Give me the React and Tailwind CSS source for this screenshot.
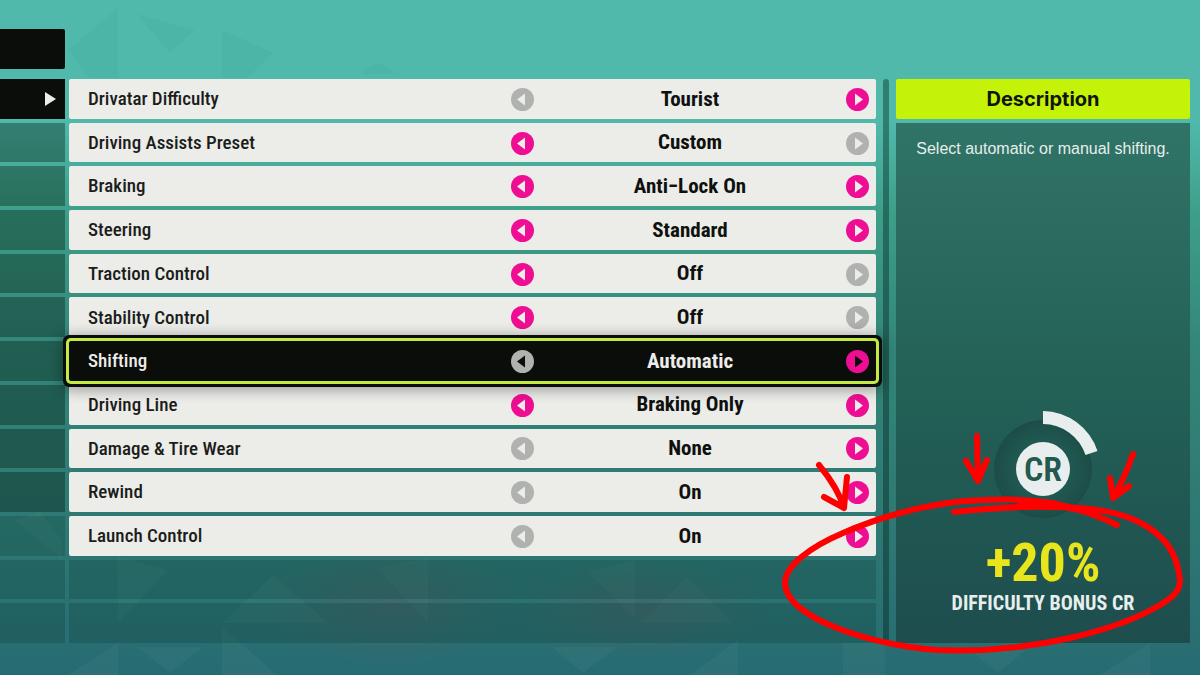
import { useState } from "react";

const SETTINGS = [
  { label: "Drivatar Difficulty", value: "Tourist", prev: false, next: true },
  { label: "Driving Assists Preset", value: "Custom", prev: true, next: false },
  { label: "Braking", value: "Anti−Lock On", prev: true, next: true },
  { label: "Steering", value: "Standard", prev: true, next: true },
  { label: "Traction Control", value: "Off", prev: true, next: false },
  { label: "Stability Control", value: "Off", prev: true, next: false },
  { label: "Shifting", value: "Automatic", prev: false, next: true },
  { label: "Driving Line", value: "Braking Only", prev: true, next: true },
  { label: "Damage & Tire Wear", value: "None", prev: false, next: true },
  { label: "Rewind", value: "On", prev: false, next: true },
  { label: "Launch Control", value: "On", prev: false, next: true },
];

const MENU_ROWS = 13;

function Backdrop() {
  return (
    <svg
      className="absolute inset-0 -z-10 size-full"
      viewBox="0 0 1200 675"
      preserveAspectRatio="none"
      aria-hidden="true"
    >
      <defs>
        <radialGradient id="ember" cx="0.5" cy="0.5" r="0.5">
          <stop offset="0" stopColor="#6b5660" stopOpacity="0.3" />
          <stop offset="1" stopColor="#6b5660" stopOpacity="0" />
        </radialGradient>
      </defs>
      <g fill="#2f8f80" fillOpacity="0.08">
        <path d="M118 8V78H90L68 50Z" />
        <path d="M136 14L195 30L170 53Z" />
        <path d="M222 30L273 53L247 78H222Z" />
        <path d="M362 74a18 18 0 0 1 32 0Z" />
      </g>
      <g fill="#5b9a95" fillOpacity="0.12">
        <path d="M15 520L62 560V540L40 512Z" />
        <path d="M118 557L168 570L118 623Z" />
        <path d="M273 575L222 623H328Z" />
        <path d="M377 568L428 558V623Z" />
        <path d="M588 572L635 560V618Z" />
        <path d="M687 577L640 623H733Z" />
        <path d="M68 675L118 643V675Z" />
        <path d="M138 647H203L170 673Z" />
        <path d="M222 627L277 675H222Z" />
        <path d="M552 647H617L583 673Z" />
        <path d="M690 675L738 640V675Z" />
        <path d="M843 643H885V675H843Z" />
        <path d="M970 650H1026L998 673Z" />
        <path d="M1100 675L1150 643V675Z" />
      </g>
      <ellipse cx="390" cy="605" rx="130" ry="60" fill="url(#ember)" />
      <ellipse cx="640" cy="610" rx="130" ry="50" fill="url(#ember)" />
    </svg>
  );
}

function ArrowButton({ direction, enabled, dark, label }) {
  return (
    <button
      type="button"
      aria-label={label}
      disabled={!enabled}
      className={`size-[23px] shrink-0 rounded-full ${
        enabled ? "bg-[#ef0e93]" : "bg-[#b0b2af]"
      }`}
    >
      <svg viewBox="0 0 23 23" className={dark ? "text-[#0b0d0a]" : "text-[#ecece9]"}>
        <path
          fill="currentColor"
          d={direction === "prev" ? "M14 5.5V17.5L6 11.5Z" : "M9 5.5V17.5L17 11.5Z"}
        />
      </svg>
    </button>
  );
}

function SettingRow({ setting, selected, onSelect }) {
  const { label, value, prev, next } = setting;
  return (
    <li
      onClick={onSelect}
      className={`flex items-center rounded-[2px] pt-px pr-[7px] pl-[19px] ${
        selected
          ? "relative z-10 bg-[#0b0d0a] text-[#ecece9] shadow-[0_0_0_3px_#c2ea42,0_0_0_6px_#0b0d0a,0_2px_14px_7px_rgba(0,0,0,0.35)]"
          : "bg-[#ecece9] text-[#1b1d1b]"
      }`}
    >
      <span className="flex-1 text-[19px] font-medium">{label}</span>
      <div className="flex w-[46%] max-w-[358px] items-center justify-between">
        <ArrowButton
          direction="prev"
          enabled={prev}
          dark={selected}
          label={`Previous ${label}`}
        />
        <span
          className={`text-[21px] font-bold ${selected ? "text-[#ecece9]" : "text-[#0f110f]"}`}
        >
          {value}
        </span>
        <ArrowButton
          direction="next"
          enabled={next}
          dark={selected}
          label={`Next ${label}`}
        />
      </div>
    </li>
  );
}

function CreditDial() {
  return (
    <svg viewBox="0 0 120 120" className="size-[120px]" role="img" aria-label="CR">
      <defs>
        <radialGradient id="dial">
          <stop offset="0.6" stopColor="#1f5850" />
          <stop offset="1" stopColor="#1d4c47" />
        </radialGradient>
      </defs>
      <circle cx="60" cy="60" r="49" fill="url(#dial)" />
      <path d="M60 2A58 58 0 0 1 114.5 42L102.5 46A45 45 0 0 0 60 15Z" fill="#e8eeed" />
      <circle cx="60" cy="60" r="27" fill="#e8eeed" />
      <text x="60" y="72" textAnchor="middle" fontSize="34" fontWeight="600" fill="#23594f">
        CR
      </text>
    </svg>
  );
}

function Markup() {
  return (
    <svg
      className="pointer-events-none absolute inset-0 z-20 size-full"
      viewBox="0 0 1200 675"
      fill="none"
      stroke="#ff0000"
      strokeWidth="6"
      strokeLinecap="round"
      strokeLinejoin="round"
      aria-hidden="true"
    >
      <path d="M1117 525C1097 515 1073 507 1052 503C1020 498 990 499 965 501C920 505 875 519 843 533C810 547 785 566 785 583C785 600 806 616 837 628C865 639 899 647 937 650C985 652 1030 647 1070 638C1105 630 1135 620 1160 605C1175 596 1180 590 1180 580C1177 552 1164 534 1137 521C1112 510 1085 507 1052 507C1020 506 990 508 954 512" />
      <path d="M1020 502C1045 502 1068 507 1095 514" />
      <path d="M819 465Q838 488 844 508M824 497L844 508L847 477" />
      <path d="M977 436L978 481M966 461L978 481L987 460" />
      <path d="M1133 454Q1125 477 1113 498M1110 478L1113 498L1129 486" />
    </svg>
  );
}

export default function App() {
  const [active, setActive] = useState(6);

  return (
    <div className="relative isolate flex min-h-screen flex-col gap-2.5 overflow-hidden bg-[linear-gradient(#50b9ab_18%,#3d9e88_32%,#338679_52%,#2f7a74_75%,#276b72)] pt-[29px] pb-8 font-['Roboto_Condensed','Roboto',sans-serif]">
      <Backdrop />

      <header className="h-10 w-[65px] rounded-r-[2px] bg-[#0b0d0a]" />

      <main className="flex flex-1 pr-2.5">
        {/* Category column */}
        <ul className="mr-1 grid w-[65px] auto-rows-fr gap-1">
          {Array.from({ length: MENU_ROWS }, (_, i) => (
            <li
              key={i}
              className={`flex items-center justify-end pr-[9px] ${
                i === 0 ? "bg-[#0b0d0a]" : i < 10 ? "bg-[#001408]/35" : "bg-[#002820]/20"
              }`}
            >
              {i === 0 && (
                <svg viewBox="0 0 11 14" className="h-3.5 w-[11px] text-[#ecece9]">
                  <path d="M0 0V14L11 7Z" fill="currentColor" />
                </svg>
              )}
            </li>
          ))}
        </ul>

        {/* Settings */}
        <ul className="grid flex-1 auto-rows-fr gap-1">
          {SETTINGS.map((setting, i) => (
            <SettingRow
              key={setting.label}
              setting={setting}
              selected={i === active}
              onSelect={() => setActive(i)}
            />
          ))}
          <li className="bg-[#002820]/20" />
          <li className="bg-[#002820]/20" />
        </ul>

        <div className="mx-[7px] w-1.5 rounded-t-full bg-[#00241c]/40" />

        {/* Description */}
        <aside className="flex w-[294px] flex-col gap-1">
          <h2 className="flex h-10 items-center justify-center rounded-[2px] bg-[#c4f208] font-['Inter','Liberation_Sans',sans-serif] text-xl font-bold text-[#0f150a]">
            Description
          </h2>
          <div className="flex flex-1 flex-col items-center bg-linear-to-b from-[#307467] via-[#225f55] via-55% to-[#1e4d4e] pt-3.5 pb-[26px] text-[#e8eeed]">
            <p className="font-['Liberation_Sans',sans-serif] text-base">
              Select automatic or manual shifting.
            </p>
            <div className="mt-auto flex flex-col items-center">
              <CreditDial />
              <p className="mt-2 text-[54px] leading-[52px] font-bold text-[#e8e51c]">+20%</p>
              <p className="text-xl font-bold">DIFFICULTY BONUS CR</p>
            </div>
          </div>
        </aside>
      </main>

      <Markup />
    </div>
  );
}
